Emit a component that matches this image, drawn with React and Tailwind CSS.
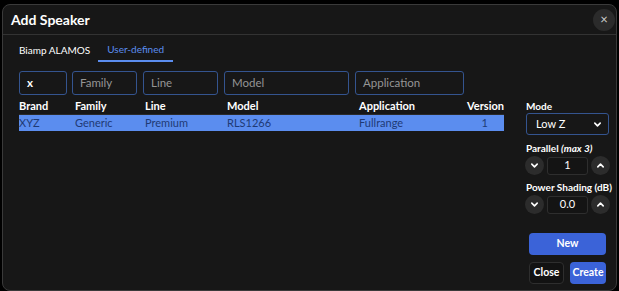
const font = { fontFamily: 'Lato, "Noto Sans", sans-serif' };

const Chevron = ({ up }) => (
  <svg width="9" height="9" viewBox="0 0 10 10" fill="none">
    <path
      d={up ? 'M2 6.5 L5 3.5 L8 6.5' : 'M2 3.5 L5 6.5 L8 3.5'}
      stroke="white"
      strokeWidth="1.8"
      strokeLinecap="round"
      strokeLinejoin="round"
    />
  </svg>
);

const Stepper = ({ value }) => (
  <div className="flex items-center gap-[3px] -ml-[1px]">
    <button className="w-[19px] h-[19px] shrink-0 rounded-full bg-[#2c2c2c] flex items-center justify-center">
      <Chevron />
    </button>
    <div className="w-[41px] h-[18px] shrink-0 rounded-[3px] border border-[#2e2e2e] bg-[#141414] flex items-center justify-center text-[11px] text-white">
      {value}
    </div>
    <button className="w-[19px] h-[19px] shrink-0 rounded-full bg-[#2c2c2c] flex items-center justify-center">
      <Chevron up />
    </button>
  </div>
);

const filters = [
  { w: 'w-[48px]', text: 'x', value: true },
  { w: 'w-[65px] ml-[5px]', text: 'Family' },
  { w: 'w-[75px] ml-[6px]', text: 'Line' },
  { w: 'w-[125px] ml-[6px]', text: 'Model' },
  { w: 'w-[109px] ml-[6px]', text: 'Application' },
];

export default function App() {
  return (
    <div className="w-[619px] h-[291px] bg-black pt-[4px] pl-[2px]" style={font}>
      <div className="w-[615px] h-[287px] rounded-lg border border-[#3a3a3a] bg-[#171717] flex flex-col overflow-hidden">
        {/* Header */}
        <div className="h-[30px] shrink-0 flex items-center justify-between pl-[8px] pr-[1px] border-b border-[#333]">
          <h1 className="text-[14px] font-bold text-white">Add Speaker</h1>
          <button className="w-[22px] h-[22px] rounded-full bg-[#2b2b2b] text-[#cfcfcf] text-[13px] flex items-center justify-center leading-none">
            ×
          </button>
        </div>

        <div className="flex flex-1 min-h-0">
          {/* Left */}
          <div className="pl-[16px] w-[503px] shrink-0">
            <div className="flex items-end h-[27px] text-[10px]">
              <div className="h-[24px] flex items-center text-white">Biamp ALAMOS</div>
              <div className="ml-[8px] px-[9px] h-[24px] flex items-center text-[#5b8def] border-b-2 border-[#5b8def]">
                User-defined
              </div>
            </div>

            <div className="flex mt-[9px]">
              {filters.map((f) => (
                <div
                  key={f.text}
                  className={`${f.w} h-[24px] rounded-[3px] border border-[#34548f] flex items-center px-[7px] text-[11.5px] ${f.value ? 'text-white font-bold' : 'text-[#959595]'}`}
                >
                  {f.text}
                </div>
              ))}
            </div>

            <div className="mt-[3px] w-[485px] text-[11px]">
              <div className="flex h-[17px] items-center font-bold text-white border-b border-[#2a2a2a]">
                <div className="w-[56px]">Brand</div>
                <div className="w-[70px]">Family</div>
                <div className="w-[82px]">Line</div>
                <div className="w-[132px]">Model</div>
                <div className="w-[106px]">Application</div>
                <div className="flex-1 text-right">Version</div>
              </div>
              <div className="flex h-[16px] items-center bg-[#5b8def] text-[#1f3a75]">
                <div className="w-[56px]">XYZ</div>
                <div className="w-[70px]">Generic</div>
                <div className="w-[82px]">Premium</div>
                <div className="w-[132px]">RLS1266</div>
                <div className="w-[106px]">Fullrange</div>
                <div className="flex-1 text-right pr-[16px]">1</div>
              </div>
            </div>
          </div>

          {/* Right */}
          <div className="ml-[20px] w-[84px] shrink-0 flex flex-col pt-[65px]">
            <div className="text-[10px] leading-[13px] font-bold text-white">Mode</div>
            <div className="h-[22px] w-[83px] rounded-[3px] border border-[#34548f] flex items-center justify-between pl-[9px] pr-[6px] text-[11px] text-white">
              <span>Low Z</span>
              <Chevron />
            </div>

            <div className="mt-[7px] text-[10px] leading-[13px] font-bold text-white whitespace-nowrap">
              Parallel <i>(max 3)</i>
            </div>
            <div className="mt-[1px]">
              <Stepper value="1" />
            </div>

            <div className="mt-[6px] text-[10px] leading-[13px] font-bold text-white whitespace-nowrap">
              Power Shading (dB)
            </div>
            <div className="mt-[1px]">
              <Stepper value="0.0" />
            </div>

            <div className="mt-[19px] ml-[3px] flex flex-col gap-[7px]">
              <button className="w-[77px] h-[22px] rounded-[4px] bg-[#3b63d8] text-white text-[10.5px] font-bold">
                New
              </button>
              <div className="flex gap-[6px]">
                <button className="w-[35px] h-[22px] rounded-[4px] border border-[#2e2e2e] bg-[#121212] text-white text-[10.5px] font-bold">
                  Close
                </button>
                <button className="w-[36px] h-[22px] rounded-[4px] bg-[#3b63d8] text-white text-[10.5px] font-bold">
                  Create
                </button>
              </div>
            </div>
          </div>
        </div>
      </div>
    </div>
  );
}
